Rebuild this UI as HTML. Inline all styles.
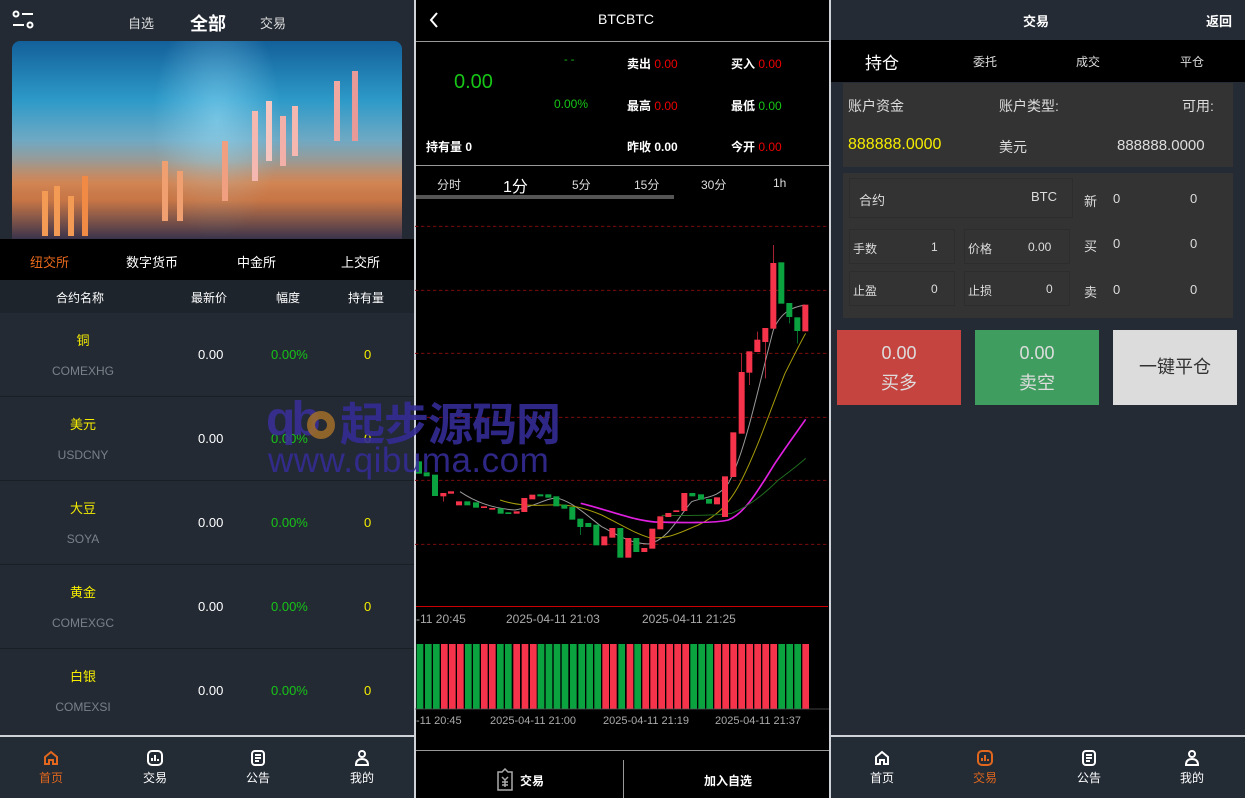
<!DOCTYPE html>
<html><head><meta charset="utf-8"><style>
*{margin:0;padding:0;box-sizing:border-box}
body{width:1245px;height:798px;overflow:hidden;background:#000;font-family:"Liberation Sans","Noto Sans CJK SC",sans-serif;position:relative;color:#fff}
.a{position:absolute}
.c{text-align:center}
.p{position:absolute;top:0;height:798px}
.nav{position:absolute;left:0;width:100%;top:735px;height:63px;background:#232b35;border-top:2px solid #cfd3d8}
.nav div{position:absolute;top:12px;width:60px;text-align:center;font-size:12px}
.nav svg{display:block;margin:0 auto 2px}
</style></head><body>

<!-- LEFT PANEL -->
<div class="p" style="left:0;width:415px;background:#232a34">
  <svg class="a" style="left:12px;top:10px" width="22" height="20" viewBox="0 0 22 20" fill="none" stroke="#fff" stroke-width="2"><circle cx="4" cy="4" r="2.5"/><line x1="10" y1="4" x2="21" y2="4"/><line x1="1" y1="15" x2="12" y2="15"/><circle cx="18" cy="15" r="2.5"/></svg>
  <div class="a" style="left:128px;top:13px;font-size:13px;color:#ddd">自选</div>
  <div class="a" style="left:190px;top:10px;font-size:18px;font-weight:bold">全部</div>
  <div class="a" style="left:260px;top:13px;font-size:13px;color:#ddd">交易</div>
  <div class="a" style="left:12px;top:41px;width:390px;height:198px;border-radius:8px 8px 0 0;overflow:hidden;background:linear-gradient(180deg,#13609a 0%,#2d9ac8 30%,#6fa9c4 50%,#c98a62 72%,#4a3e50 100%)">
    <div class="a" style="left:140px;top:0;width:130px;height:198px;background:radial-gradient(ellipse at 50% 40%,rgba(160,230,255,.5),rgba(0,0,0,0) 70%)"></div>
    <div class="a" style="left:0;top:120px;width:390px;height:78px;background:linear-gradient(180deg,rgba(230,130,60,.0),rgba(230,120,50,.55) 50%,rgba(40,40,70,.5))"></div>
    <div class="a" style="left:240px;top:70px;width:6px;height:70px;background:#f4b8b0"></div>
    <div class="a" style="left:254px;top:60px;width:6px;height:60px;background:#f6c6c0"></div>
    <div class="a" style="left:268px;top:75px;width:6px;height:50px;background:#f3b0a8"></div>
    <div class="a" style="left:280px;top:65px;width:6px;height:50px;background:#f4b8b0"></div>
    <div class="a" style="left:322px;top:40px;width:6px;height:60px;background:#f0a8a0"></div>
    <div class="a" style="left:340px;top:30px;width:6px;height:70px;background:#e89a98"></div>
    <div class="a" style="left:30px;top:150px;width:6px;height:45px;background:#f39a55"></div>
    <div class="a" style="left:42px;top:145px;width:6px;height:50px;background:#f39a55"></div>
    <div class="a" style="left:56px;top:155px;width:6px;height:40px;background:#f39a55"></div>
    <div class="a" style="left:70px;top:135px;width:6px;height:60px;background:#f08a45"></div>
    <div class="a" style="left:150px;top:120px;width:6px;height:60px;background:#f0a070"></div>
    <div class="a" style="left:165px;top:130px;width:6px;height:50px;background:#f0a070"></div>
    <div class="a" style="left:210px;top:100px;width:6px;height:60px;background:#f0a080"></div>
  </div>
  <div class="a" style="left:0;top:239px;width:415px;height:41px;background:#000"></div>
  <div class="a" style="left:30px;top:252px;font-size:13px;color:#e8691c">纽交所</div>
  <div class="a" style="left:126px;top:252px;font-size:13px">数字货币</div>
  <div class="a" style="left:237px;top:252px;font-size:13px">中金所</div>
  <div class="a" style="left:341px;top:252px;font-size:13px">上交所</div>
  <div class="a" style="left:0;top:280px;width:415px;height:33px;background:#1e242c"></div>
  <div class="a" style="left:56px;top:289px;font-size:12px">合约名称</div>
  <div class="a" style="left:191px;top:289px;font-size:12px">最新价</div>
  <div class="a" style="left:276px;top:289px;font-size:12px">幅度</div>
  <div class="a" style="left:348px;top:289px;font-size:12px">持有量</div>

  <div class="a" style="left:0;top:313px;width:415px">
    <div style="position:relative;height:84px;border-bottom:1px solid #1a1f26"><div class="a c" style="left:33px;width:100px;top:17px;font-size:13px;color:#f5ec00">铜</div><div class="a c" style="left:33px;width:100px;top:51px;font-size:12px;color:#7a8088">COMEXHG</div><div class="a" style="left:198px;top:34px;font-size:13px">0.00</div><div class="a" style="left:271px;top:34px;font-size:13px;color:#17c517">0.00%</div><div class="a" style="left:364px;top:34px;font-size:13px;color:#f5ec00">0</div></div>
    <div style="position:relative;height:84px;border-bottom:1px solid #1a1f26"><div class="a c" style="left:33px;width:100px;top:17px;font-size:13px;color:#f5ec00">美元</div><div class="a c" style="left:33px;width:100px;top:51px;font-size:12px;color:#7a8088">USDCNY</div><div class="a" style="left:198px;top:34px;font-size:13px">0.00</div><div class="a" style="left:271px;top:34px;font-size:13px;color:#17c517">0.00%</div><div class="a" style="left:364px;top:34px;font-size:13px;color:#f5ec00">0</div></div>
    <div style="position:relative;height:84px;border-bottom:1px solid #1a1f26"><div class="a c" style="left:33px;width:100px;top:17px;font-size:13px;color:#f5ec00">大豆</div><div class="a c" style="left:33px;width:100px;top:51px;font-size:12px;color:#7a8088">SOYA</div><div class="a" style="left:198px;top:34px;font-size:13px">0.00</div><div class="a" style="left:271px;top:34px;font-size:13px;color:#17c517">0.00%</div><div class="a" style="left:364px;top:34px;font-size:13px;color:#f5ec00">0</div></div>
    <div style="position:relative;height:84px;border-bottom:1px solid #1a1f26"><div class="a c" style="left:33px;width:100px;top:17px;font-size:13px;color:#f5ec00">黄金</div><div class="a c" style="left:33px;width:100px;top:51px;font-size:12px;color:#7a8088">COMEXGC</div><div class="a" style="left:198px;top:34px;font-size:13px">0.00</div><div class="a" style="left:271px;top:34px;font-size:13px;color:#17c517">0.00%</div><div class="a" style="left:364px;top:34px;font-size:13px;color:#f5ec00">0</div></div>
    <div style="position:relative;height:84px"><div class="a c" style="left:33px;width:100px;top:17px;font-size:13px;color:#f5ec00">白银</div><div class="a c" style="left:33px;width:100px;top:51px;font-size:12px;color:#7a8088">COMEXSI</div><div class="a" style="left:198px;top:34px;font-size:13px">0.00</div><div class="a" style="left:271px;top:34px;font-size:13px;color:#17c517">0.00%</div><div class="a" style="left:364px;top:34px;font-size:13px;color:#f5ec00">0</div></div>
  </div>

  <div class="nav">
    <div style="left:21px;color:#e0671d"><svg width="18" height="18" viewBox="0 0 18 18" fill="none" stroke="#e0671d" stroke-width="2"><path d="M3 8 L9 3 L15 8 V15 H11 V11 H7 V15 H3 Z"/></svg>首页</div>
    <div style="left:125px"><svg width="18" height="18" viewBox="0 0 18 18" fill="none" stroke="#fff" stroke-width="2"><rect x="2" y="2" width="14" height="14" rx="4"/><path d="M6 12V9M9 12V6M12 12V10"/></svg>交易</div>
    <div style="left:228px"><svg width="18" height="18" viewBox="0 0 18 18" fill="none" stroke="#fff" stroke-width="2"><rect x="3" y="2" width="12" height="14" rx="3"/><path d="M6 6H12M6 9H12M6 12H10"/></svg>公告</div>
    <div style="left:332px"><svg width="18" height="18" viewBox="0 0 18 18" fill="none" stroke="#fff" stroke-width="2"><circle cx="9" cy="5" r="3"/><path d="M3 16 Q3 10 9 10 Q15 10 15 16 Z"/></svg>我的</div>
  </div>
</div>
<div class="a" style="left:414px;top:0;width:2px;height:798px;background:#cfd3d8"></div>

<!-- MIDDLE PANEL -->
<div class="p" style="left:416px;width:414px;background:#000">
  <svg class="a" style="left:12px;top:11px" width="12" height="18" viewBox="0 0 12 18" fill="none" stroke="#fff" stroke-width="2"><path d="M9 2 L3 9 L9 16"/></svg>
  <div class="a" style="left:182px;top:11px;font-size:14px">BTCBTC</div>
  <div class="a" style="left:0;top:41px;width:414px;height:1px;background:#999"></div>
  <div class="a" style="left:38px;top:71px;font-size:20px;color:#17c517">0.00</div>
  <div class="a" style="left:148px;top:54px;font-size:11px;color:#17c517">- -</div>
  <div class="a" style="left:138px;top:97px;font-size:12px;color:#17c517">0.00%</div>
  <div class="a" style="left:211px;top:55px;font-size:12px;font-weight:bold">卖出 <span style="color:#e00;font-weight:normal">0.00</span></div>
  <div class="a" style="left:315px;top:55px;font-size:12px;font-weight:bold">买入 <span style="color:#e00;font-weight:normal">0.00</span></div>
  <div class="a" style="left:211px;top:97px;font-size:12px;font-weight:bold">最高 <span style="color:#e00;font-weight:normal">0.00</span></div>
  <div class="a" style="left:315px;top:97px;font-size:12px;font-weight:bold">最低 <span style="color:#17c517;font-weight:normal">0.00</span></div>
  <div class="a" style="left:10px;top:138px;font-size:12px;font-weight:bold">持有量 0</div>
  <div class="a" style="left:211px;top:138px;font-size:12px;font-weight:bold">昨收 0.00</div>
  <div class="a" style="left:315px;top:138px;font-size:12px;font-weight:bold">今开 <span style="color:#e00;font-weight:normal">0.00</span></div>
  <div class="a" style="left:0;top:165px;width:414px;height:1px;background:#999"></div>
  <div class="a" style="left:21px;top:176px;font-size:12px;color:#ddd">分时</div>
  <div class="a" style="left:87px;top:173px;font-size:16px">1分</div>
  <div class="a" style="left:156px;top:176px;font-size:12px;color:#ddd">5分</div>
  <div class="a" style="left:218px;top:176px;font-size:12px;color:#ddd">15分</div>
  <div class="a" style="left:285px;top:176px;font-size:12px;color:#ddd">30分</div>
  <div class="a" style="left:357px;top:176px;font-size:12px;color:#ddd">1h</div>
  <div class="a" style="left:0;top:195px;width:258px;height:4px;background:#555"></div>
</div>

<svg class="a" style="left:415px;top:200px" width="415" height="400" viewBox="0 0 1245 1200">
  <g stroke="#7a0c0c" stroke-width="3" stroke-dasharray="10 8">
    <line x1="0" y1="79" x2="1245" y2="79"/><line x1="0" y1="271" x2="1245" y2="271"/><line x1="0" y1="460" x2="1245" y2="460"/><line x1="0" y1="652" x2="1245" y2="652"/><line x1="0" y1="841" x2="1245" y2="841"/><line x1="0" y1="1033" x2="1245" y2="1033"/>
  </g>
  <g stroke-width="3" fill="none">
    <path d="M135 875 C180 905 230 925 300 930 C360 920 400 890 430 895 C480 910 520 950 560 980 C600 1000 640 1030 700 1032 C760 1020 790 950 830 905 C870 890 910 895 940 850 C990 760 1030 560 1075 390 C1100 330 1140 320 1170 315" stroke="#9a9a9a"/>
    <path d="M255 900 C300 915 340 918 400 915 C460 912 500 920 560 945 C620 975 660 1000 700 1012 C760 1020 800 995 850 975 C900 950 940 920 980 840 C1030 740 1070 620 1110 520 C1140 460 1160 420 1172 400" stroke="#a59b0a"/>
    <path d="M497 910 C580 930 650 960 720 966 C800 968 900 970 940 960 C990 940 1030 870 1080 790 C1120 730 1150 690 1172 658" stroke="#e020e0" stroke-width="5"/>
    <path d="M740 946 C800 947 880 948 950 940 C1000 920 1050 880 1090 840 C1130 810 1150 795 1172 775" stroke="#1f6a1f"/>
  </g>
  <g fill="#f5334a" stroke="#f5334a" stroke-width="2">
    <rect x="77" y="880" width="16" height="8"/><line x1="85" y1="888" x2="85" y2="905"/>
    <rect x="100" y="875" width="16" height="5"/><rect x="124" y="905" width="16" height="10"/><rect x="199" y="920" width="16" height="3"/><rect x="224" y="925" width="16" height="3"/><rect x="297" y="935" width="16" height="5"/>
    <rect x="320" y="895" width="16" height="40"/><rect x="344" y="885" width="16" height="12"/>
    <rect x="560" y="1010" width="16" height="25"/><rect x="584" y="985" width="16" height="27"/><rect x="632" y="1015" width="16" height="57"/><rect x="680" y="1045" width="16" height="10"/>
    <rect x="704" y="987" width="16" height="58"/><rect x="728" y="950" width="16" height="37"/><rect x="752" y="940" width="16" height="10"/><rect x="776" y="932" width="16" height="3"/><rect x="800" y="880" width="16" height="52"/>
    <rect x="898" y="893" width="16" height="19"/><rect x="922" y="830" width="16" height="120"/><rect x="947" y="698" width="16" height="132"/>
    <rect x="972" y="517" width="16" height="183"/><line x1="980" y1="460" x2="980" y2="517"/>
    <rect x="995" y="455" width="16" height="62"/><line x1="1003" y1="517" x2="1003" y2="555"/>
    <rect x="1019" y="420" width="16" height="35"/><line x1="1027" y1="395" x2="1027" y2="420"/>
    <rect x="1043" y="385" width="16" height="40"/><line x1="1051" y1="425" x2="1051" y2="535"/>
    <rect x="1067" y="190" width="16" height="195"/><line x1="1075" y1="135" x2="1075" y2="190"/>
    <rect x="1163" y="315" width="16" height="78"/>
  </g>
  <g fill="#0aa340" stroke="#0aa340" stroke-width="2">
    <rect x="4" y="785" width="16" height="35"/><rect x="27" y="818" width="16" height="10"/><rect x="52" y="825" width="16" height="62"/>
    <rect x="149" y="905" width="16" height="10"/><rect x="175" y="908" width="16" height="14"/><rect x="249" y="926" width="16" height="14"/><rect x="272" y="938" width="16" height="3"/>
    <rect x="368" y="884" width="16" height="4"/><rect x="392" y="884" width="16" height="8"/><rect x="416" y="890" width="16" height="28"/><rect x="440" y="915" width="16" height="10"/>
    <rect x="464" y="922" width="16" height="36"/><rect x="488" y="957" width="16" height="23"/><line x1="496" y1="980" x2="496" y2="1005"/><rect x="512" y="970" width="16" height="10"/>
    <rect x="536" y="975" width="16" height="60"/><rect x="608" y="985" width="16" height="87"/><rect x="656" y="1015" width="16" height="40"/>
    <rect x="824" y="880" width="16" height="8"/><rect x="850" y="884" width="16" height="14"/><rect x="874" y="898" width="16" height="12"/>
    <rect x="1091" y="188" width="16" height="122"/><rect x="1115" y="310" width="16" height="40"/><line x1="1123" y1="350" x2="1123" y2="370"/>
    <rect x="1139" y="353" width="16" height="39"/><line x1="1147" y1="392" x2="1147" y2="430"/>
  </g>
</svg>

<!-- watermark -->
<div class="a" style="left:266px;top:400px;width:70px;height:40px;color:#3a2f9a;font-size:48px;font-weight:bold;line-height:40px;letter-spacing:-4px;opacity:.85">qb</div>
<div class="a" style="left:307px;top:411px;width:28px;height:28px;border-radius:50%;border:8px solid #9a6a2a;opacity:.9"></div>
<div class="a" style="left:340px;top:396px;font-size:45px;font-weight:bold;color:#342c94;opacity:.9;line-height:50px;font-family:'Noto Sans CJK SC',sans-serif;letter-spacing:-1px">起步源码网</div>
<div class="a" style="left:268px;top:443px;font-size:35px;color:#342c94;opacity:.9;line-height:36px;letter-spacing:0.5px">www.qibuma.com</div>

<div class="a" style="left:416px;top:606px;width:412px;height:1px;background:#c00"></div>
<div class="a" style="left:416px;top:612px;font-size:12px;color:#aaa">-11 20:45</div>
<div class="a" style="left:506px;top:612px;font-size:12px;color:#aaa">2025-04-11 21:03</div>
<div class="a" style="left:642px;top:612px;font-size:12px;color:#aaa">2025-04-11 21:25</div>
<svg class="a" style="left:415px;top:640px" width="415" height="75" viewBox="0 0 1245 225">
  <g fill="#0aa340"><rect x="5" y="12" width="20" height="195"/><rect x="30" y="12" width="20" height="195"/><rect x="54" y="12" width="20" height="195"/><rect x="150" y="12" width="20" height="195"/><rect x="174" y="12" width="20" height="195"/><rect x="246" y="12" width="20" height="195"/><rect x="270" y="12" width="20" height="195"/><rect x="368" y="12" width="20" height="195"/><rect x="392" y="12" width="20" height="195"/><rect x="416" y="12" width="20" height="195"/><rect x="440" y="12" width="20" height="195"/><rect x="465" y="12" width="20" height="195"/><rect x="490" y="12" width="20" height="195"/><rect x="514" y="12" width="20" height="195"/><rect x="538" y="12" width="20" height="195"/><rect x="610" y="12" width="20" height="195"/><rect x="658" y="12" width="20" height="195"/><rect x="826" y="12" width="20" height="195"/><rect x="850" y="12" width="20" height="195"/><rect x="874" y="12" width="20" height="195"/><rect x="1090" y="12" width="20" height="195"/><rect x="1114" y="12" width="20" height="195"/><rect x="1138" y="12" width="20" height="195"/></g>
  <g fill="#f5334a"><rect x="78" y="12" width="20" height="195"/><rect x="102" y="12" width="20" height="195"/><rect x="126" y="12" width="20" height="195"/><rect x="198" y="12" width="20" height="195"/><rect x="222" y="12" width="20" height="195"/><rect x="295" y="12" width="20" height="195"/><rect x="320" y="12" width="20" height="195"/><rect x="345" y="12" width="20" height="195"/><rect x="562" y="12" width="20" height="195"/><rect x="585" y="12" width="20" height="195"/><rect x="635" y="12" width="20" height="195"/><rect x="682" y="12" width="20" height="195"/><rect x="706" y="12" width="20" height="195"/><rect x="730" y="12" width="20" height="195"/><rect x="754" y="12" width="20" height="195"/><rect x="778" y="12" width="20" height="195"/><rect x="802" y="12" width="20" height="195"/><rect x="898" y="12" width="20" height="195"/><rect x="922" y="12" width="20" height="195"/><rect x="946" y="12" width="20" height="195"/><rect x="970" y="12" width="20" height="195"/><rect x="994" y="12" width="20" height="195"/><rect x="1018" y="12" width="20" height="195"/><rect x="1042" y="12" width="20" height="195"/><rect x="1066" y="12" width="20" height="195"/><rect x="1162" y="12" width="20" height="195"/></g>
  <line x1="0" y1="207" x2="1245" y2="207" stroke="#555" stroke-width="2"/>
</svg>
<div class="a" style="left:416px;top:715px;font-size:11px;color:#aaa">-11 20:45</div>
<div class="a" style="left:490px;top:715px;font-size:11px;color:#aaa">2025-04-11 21:00</div>
<div class="a" style="left:603px;top:715px;font-size:11px;color:#aaa">2025-04-11 21:19</div>
<div class="a" style="left:715px;top:715px;font-size:11px;color:#aaa">2025-04-11 21:37</div>
<div class="a" style="left:416px;top:750px;width:414px;height:1px;background:#999"></div>
<div class="a" style="left:623px;top:760px;width:1px;height:38px;background:#999"></div>
<svg class="a" style="left:496px;top:768px" width="18" height="24" viewBox="0 0 18 24" fill="none" stroke="#aaa" stroke-width="1.5"><path d="M2 4 H6 L9 1 L12 4 H16 V22 H2 Z"/><path d="M6 9 L9 12 L12 9 M9 12 V19 M6 14 H12 M6 17 H12"/></svg>
<div class="a" style="left:520px;top:772px;font-size:12px;font-weight:bold">交易</div>
<div class="a" style="left:704px;top:772px;font-size:12px;font-weight:bold">加入自选</div>

<!-- RIGHT PANEL -->
<div class="a" style="left:829px;top:0;width:2px;height:798px;background:#cfd3d8"></div>
<div class="p" style="left:831px;width:414px;background:#242b35">
  <div class="a" style="left:192px;top:11px;font-size:13px;font-weight:bold">交易</div>
  <div class="a" style="left:375px;top:11px;font-size:13px;font-weight:bold">返回</div>
  <div class="a" style="left:0;top:40px;width:414px;height:42px;background:#000"></div>
  <div class="a" style="left:34px;top:49px;font-size:17px">持仓</div>
  <div class="a" style="left:142px;top:53px;font-size:12px;color:#ddd">委托</div>
  <div class="a" style="left:245px;top:53px;font-size:12px;color:#ddd">成交</div>
  <div class="a" style="left:349px;top:53px;font-size:12px;color:#ddd">平仓</div>
  <div class="a" style="left:12px;top:83px;width:390px;height:84px;background:#333"></div>
  <div class="a" style="left:17px;top:96px;font-size:14px;color:#ddd">账户资金</div>
  <div class="a" style="left:168px;top:96px;font-size:14px;color:#ddd">账户类型:</div>
  <div class="a" style="left:351px;top:96px;font-size:14px;color:#ddd">可用:</div>
  <div class="a" style="left:17px;top:136px;font-size:16px;color:#f5ec00">888888.0000</div>
  <div class="a" style="left:168px;top:137px;font-size:14px;color:#ddd">美元</div>
  <div class="a" style="left:286px;top:137px;font-size:15px;color:#ddd">888888.0000</div>
  <div class="a" style="left:12px;top:173px;width:390px;height:145px;background:#333"></div>
  <div class="a" style="left:18px;top:178px;width:224px;height:40px;border:1px solid #2d2d2d"></div>
  <div class="a" style="left:18px;top:229px;width:106px;height:35px;border:1px solid #2d2d2d"></div>
  <div class="a" style="left:133px;top:229px;width:106px;height:35px;border:1px solid #2d2d2d"></div>
  <div class="a" style="left:18px;top:271px;width:106px;height:35px;border:1px solid #2d2d2d"></div>
  <div class="a" style="left:133px;top:271px;width:106px;height:35px;border:1px solid #2d2d2d"></div>
  <div class="a" style="left:28px;top:190px;font-size:13px;color:#ddd">合约</div>
  <div class="a" style="left:200px;top:189px;font-size:13px;color:#ddd">BTC</div>
  <div class="a" style="left:22px;top:240px;font-size:12px;color:#ddd">手数</div>
  <div class="a" style="left:100px;top:240px;font-size:12px;color:#ddd">1</div>
  <div class="a" style="left:137px;top:240px;font-size:12px;color:#ddd">价格</div>
  <div class="a" style="left:197px;top:240px;font-size:12px;color:#ddd">0.00</div>
  <div class="a" style="left:22px;top:282px;font-size:12px;color:#ddd">止盈</div>
  <div class="a" style="left:100px;top:282px;font-size:12px;color:#ddd">0</div>
  <div class="a" style="left:137px;top:282px;font-size:12px;color:#ddd">止损</div>
  <div class="a" style="left:215px;top:282px;font-size:12px;color:#ddd">0</div>
  <div class="a" style="left:253px;top:191px;font-size:13px;color:#ddd">新</div><div class="a" style="left:282px;top:191px;font-size:13px;color:#ddd">0</div><div class="a" style="left:359px;top:191px;font-size:13px;color:#ddd">0</div>
  <div class="a" style="left:253px;top:236px;font-size:13px;color:#ddd">买</div><div class="a" style="left:282px;top:236px;font-size:13px;color:#ddd">0</div><div class="a" style="left:359px;top:236px;font-size:13px;color:#ddd">0</div>
  <div class="a" style="left:253px;top:282px;font-size:13px;color:#ddd">卖</div><div class="a" style="left:282px;top:282px;font-size:13px;color:#ddd">0</div><div class="a" style="left:359px;top:282px;font-size:13px;color:#ddd">0</div>
  <div class="a c" style="left:6px;top:330px;width:124px;height:75px;background:#c64440;color:#ddd;font-size:18px;line-height:30px;padding-top:8px">0.00<br>买多</div>
  <div class="a c" style="left:144px;top:330px;width:124px;height:75px;background:#3f9e5f;color:#ddd;font-size:18px;line-height:30px;padding-top:8px">0.00<br>卖空</div>
  <div class="a c" style="left:282px;top:330px;width:124px;height:75px;background:#dcdcdc;color:#333;font-size:18px;line-height:75px">一键平仓</div>
  <div class="nav">
    <div style="left:21px"><svg width="18" height="18" viewBox="0 0 18 18" fill="none" stroke="#fff" stroke-width="2"><path d="M3 8 L9 3 L15 8 V15 H11 V11 H7 V15 H3 Z"/></svg>首页</div>
    <div style="left:124px;color:#e0671d"><svg width="18" height="18" viewBox="0 0 18 18" fill="none" stroke="#e0671d" stroke-width="2"><rect x="2" y="2" width="14" height="14" rx="4"/><path d="M6 12V9M9 12V6M12 12V10"/></svg>交易</div>
    <div style="left:228px"><svg width="18" height="18" viewBox="0 0 18 18" fill="none" stroke="#fff" stroke-width="2"><rect x="3" y="2" width="12" height="14" rx="3"/><path d="M6 6H12M6 9H12M6 12H10"/></svg>公告</div>
    <div style="left:331px"><svg width="18" height="18" viewBox="0 0 18 18" fill="none" stroke="#fff" stroke-width="2"><circle cx="9" cy="5" r="3"/><path d="M3 16 Q3 10 9 10 Q15 10 15 16 Z"/></svg>我的</div>
  </div>
</div>
</body></html>
